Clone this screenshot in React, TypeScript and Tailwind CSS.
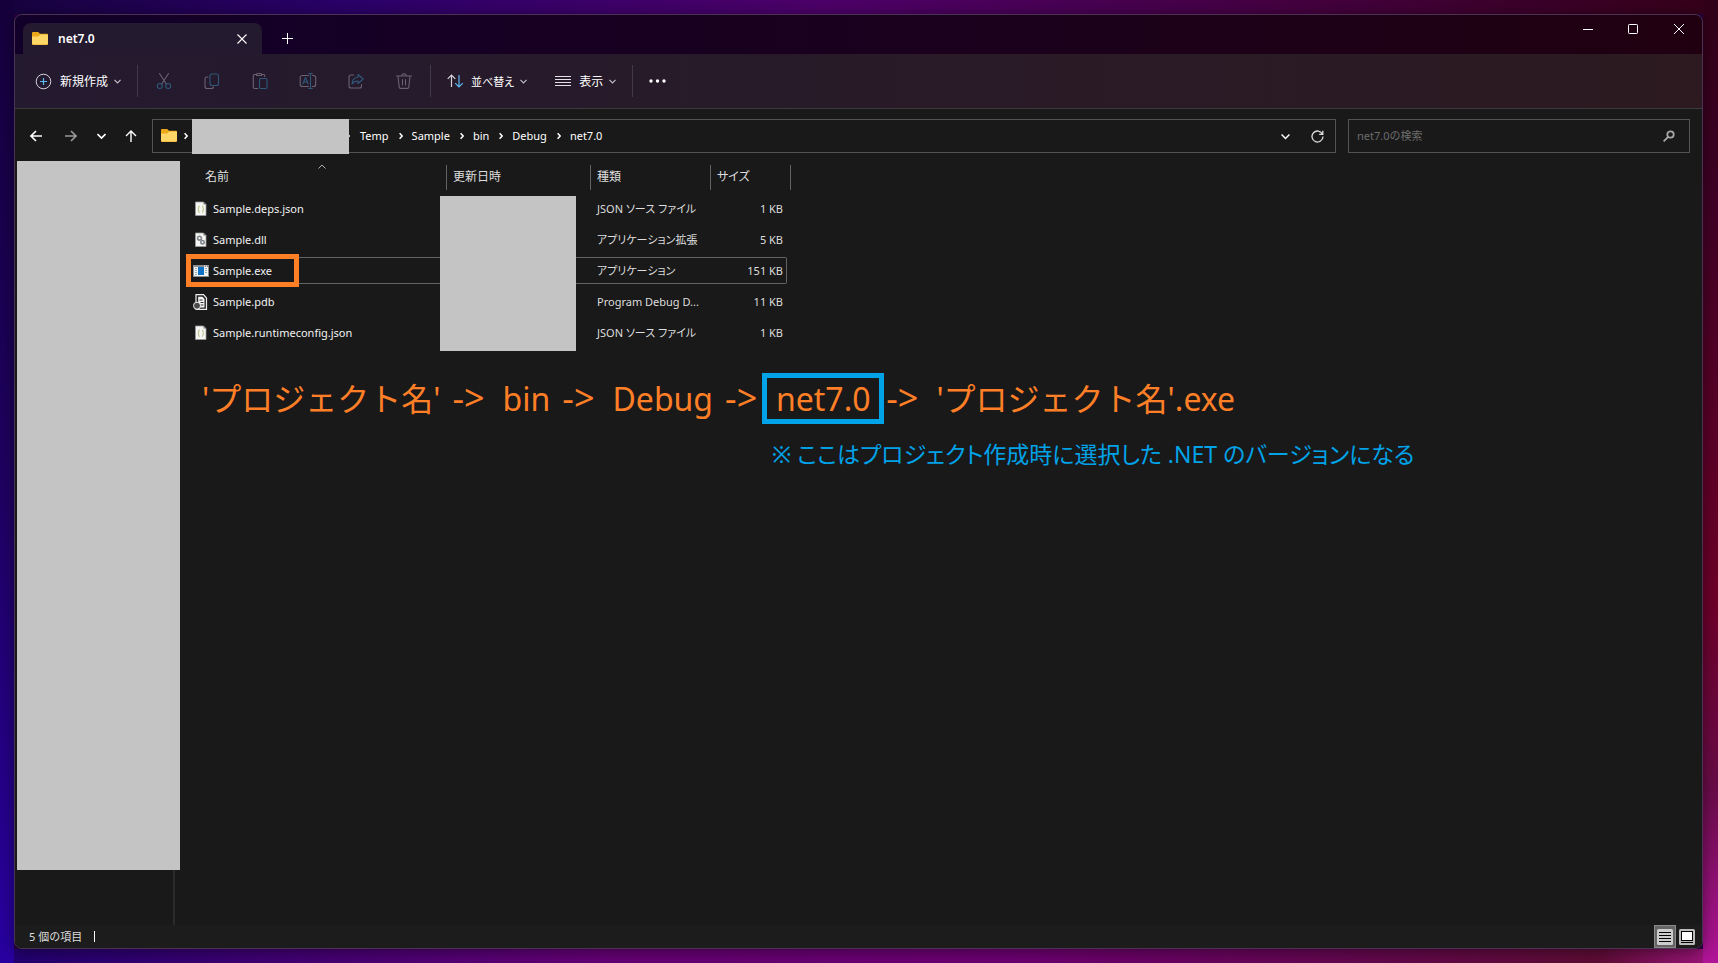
import React from 'react';

type FileKind = 'json' | 'dll' | 'exe' | 'pdb';

interface FileItem {
  name: string;
  kind: FileKind;
  type: string;
  size: string;
}

const FILES: FileItem[] = [
  { name: 'Sample.deps.json', kind: 'json', type: 'JSON ソース ファイル', size: '1 KB' },
  { name: 'Sample.dll', kind: 'dll', type: 'アプリケーション拡張', size: '5 KB' },
  { name: 'Sample.exe', kind: 'exe', type: 'アプリケーション', size: '151 KB' },
  { name: 'Sample.pdb', kind: 'pdb', type: 'Program Debug D...', size: '11 KB' },
  { name: 'Sample.runtimeconfig.json', kind: 'json', type: 'JSON ソース ファイル', size: '1 KB' },
];

const CRUMBS = ['Temp', 'Sample', 'bin', 'Debug', 'net7.0'];

const FolderIcon = () => (
  <svg width="16" height="14" viewBox="0 0 16 14" className="shrink-0">
    <path d="M0 1.2C0 .5.5 0 1.2 0h5L8 1.800h7c.6 0 1 .4 1 1V12H0z" fill="#eba91a" />
    <path d="M0 4.4h6.2L8 2.6h7.2c.5 0 .8.3.8.8v8.4c0 .7-.5 1.2-1.2 1.2H1.2C.5 13 0 12.5 0 11.8z" fill="#ffd766" />
    <path d="M0 11.2c0 .7.5 1.2 1.2 1.2h13.6c.7 0 1.2-.5 1.2-1.2v.6c0 .7-.5 1.2-1.2 1.2H1.2C.5 13 0 12.5 0 11.8z" fill="#e8a820" />
  </svg>
);

const ChevronDown = ({ size = 7 }: { size?: number }) => (
  <svg width={size} height={size} viewBox="0 0 8 8" fill="none" stroke="currentColor" strokeWidth="1.3">
    <path d="M.5 2.2 4 5.700l3.500-3.500" />
  </svg>
);

const CrumbChevron = () => (
  <svg width="4" height="8" viewBox="0 0 4 8" fill="none" stroke="#fff" strokeWidth="1.5" className="shrink-0">
    <path d="M.6 1.2 3.2 4 .6 6.8" />
  </svg>
);

const ToolIcon = ({ children }: { children: React.ReactNode }) => (
  <svg width="18" height="18" viewBox="0 0 18 18" fill="none" stroke="#6a6272" strokeWidth="1.1" strokeLinecap="round" strokeLinejoin="round">
    {children}
  </svg>
);

const BLUE = '#2f5878';

const TOOLS = [
  {
    label: '切り取り',
    icon: (
      <ToolIcon>
        <path d="M4.500 1.500 11.300 12M13.500 1.500 6.700 12" />
        <circle cx="4.800" cy="14" r="2.500" stroke={BLUE} />
        <circle cx="13.200" cy="14" r="2.500" stroke={BLUE} />
      </ToolIcon>
    ),
  },
  {
    label: 'コピー',
    icon: (
      <ToolIcon>
        <path d="M5 5H4a2 2 0 0 0-2 2v7.500a2 2 0 0 0 2 2h4.500a2 2 0 0 0 2-1.500" />
        <rect x="7" y="2" width="8.500" height="11.500" rx="2" stroke={BLUE} />
      </ToolIcon>
    ),
  },
  {
    label: '貼り付け',
    icon: (
      <ToolIcon>
        <path d="M5.500 2.500H3.500a1.200 1.200 0 0 0-1.200 1.200v11.600a1.200 1.200 0 0 0 1.200 1.200h3.200M10.500 2.500h2a1.200 1.200 0 0 1 1.200 1.200v.8M5.500 3.500v-1a1 1 0 0 1 1-1h3a1 1 0 0 1 1 1v1z" />
        <rect x="8.500" y="6.500" width="7.500" height="10" rx="1.200" stroke={BLUE} />
      </ToolIcon>
    ),
  },
  {
    label: '名前の変更',
    icon: (
      <ToolIcon>
        <path d="M9.500 3.500H3.200a2 2 0 0 0-2 2v7a2 2 0 0 0 2 2h6.300M13.500 3.500h1.200a2 2 0 0 1 2 2v7a2 2 0 0 1-2 2h-1.200" />
        <path d="m3.800 12 2.700-6.500L9.200 12M4.700 10h3.600M9.700 1.500h3.600M9.700 16.500h3.600M11.500 1.500v15" stroke={BLUE} />
      </ToolIcon>
    ),
  },
  {
    label: '共有',
    icon: (
      <ToolIcon>
        <path d="M6.500 3H4a2 2 0 0 0-2 2v9a2 2 0 0 0 2 2h8.500a2 2 0 0 0 2-2v-1.500" />
        <path d="M11 2.500 16.200 7 11 11.500V9C8 9 6.300 10 5 12c.2-3.700 2.300-6.500 6-6.800z" stroke={BLUE} />
      </ToolIcon>
    ),
  },
  {
    label: '削除',
    icon: (
      <ToolIcon>
        <path d="M1.500 4h15M6.800 4a2.200 2.200 0 0 1 4.400 0M3 4l1.200 11a1.500 1.500 0 0 0 1.500 1.400h6.600a1.500 1.500 0 0 0 1.500-1.400L15 4M7.500 7.500v5.500M10.500 7.500v5.500" />
      </ToolIcon>
    ),
  },
];

const FileIcon = ({ kind }: { kind: FileKind }) => {
  if (kind === 'exe') {
    return (
      <svg width="16" height="14" viewBox="0 0 16 14">
        <path d="M0 1h16v12H0z" fill="#8b8f93" />
        <path d="M1 3h14v9H1z" fill="#f4f4f4" />
        <path d="M5 3h6v8H5z" fill="#0f72c4" />
        <path d="M2 4.500h2M2 6.500h2M2 8.500h2M2 10.500h2M12 4.500h2M12 6.500h2M12 8.500h2" stroke="#9aa" />
        <path d="M11 2h1M13 2h1" stroke="#fff" />
      </svg>
    );
  }
  if (kind === 'pdb') {
    return (
      <svg width="16" height="16" viewBox="0 0 16 16">
        <path d="M3 .6h7.500L13.500 4v11.400H3z" fill="#222" stroke="#eee" strokeWidth="1.200" />
        <path d="M5.200 2.800h4.300l2 2.200v8.500H5.200z" fill="#f6f6f6" />
        <path d="M6.500 6h3M7.500 8.500h3M7.500 11h3" stroke="#333" />
        <circle cx="4" cy="11.700" r="3.500" fill="#4a4a4a" stroke="#eee" strokeWidth="1" />
      </svg>
    );
  }
  return (
    <svg width="16" height="16" viewBox="0 0 16 16">
      <path d="M2.500 1h8L13 3.500v11H2.500z" fill="#f5f5f3" stroke="#9a9a9a" strokeWidth=".8" />
      <path d="M10.500 1v2.500H13z" fill="#777" />
      {kind === 'json' ? (
        <path d="M6.600 5c-1 0-.9.7-.9 1.600s-.1 1.400-.8 1.600c.7.2.8.8.8 1.700s0 1.600.9 1.600M9 5c1 0 .9.7.9 1.600s.1 1.400.8 1.600c-.7.2-.8.8-.8 1.700s0 1.600-.9 1.600" fill="none" stroke="#b3b66a" />
      ) : (
        <g fill="none" stroke="#80868c">
          <circle cx="6.500" cy="6.200" r="1.900" strokeWidth="1.600" />
          <circle cx="9.500" cy="10.200" r="1.700" strokeWidth="1.600" />
        </g>
      )}
    </svg>
  );
};

const TitleBar = () => (
  <header className="flex h-[39px] items-end justify-between bg-linear-to-r from-[#12002a] via-[#180020] via-40% to-[#200010]">
    <div className="flex items-end pl-2">
      <div className="flex h-[31px] w-[239px] items-center justify-between rounded-t-lg bg-[#241a2f] pr-[13px] pl-[9px]">
        <div className="flex items-center gap-[10px] text-xs font-semibold">
          <FolderIcon />
          <span>net7.0</span>
        </div>
        <button aria-label="タブを閉じる" className="flex h-4 w-[14px] items-center justify-center">
          <svg width="10" height="10" viewBox="0 0 10 10" stroke="#fff" strokeWidth="1.1"><path d="m.5.5 9 9M9.500.5l-9 9" /></svg>
        </button>
      </div>
      <button aria-label="新しいタブ" className="ml-[14px] flex h-[31px] w-[23px] items-center justify-center">
        <svg width="11" height="11" viewBox="0 0 11 11" stroke="#fff"><path d="M5.500 0v11M0 5.500h11" /></svg>
      </button>
    </div>
    <div className="flex h-full items-start">
      <button aria-label="最小化" className="flex h-7 w-11 items-center justify-center">
        <svg width="10" height="10" viewBox="0 0 10 10" stroke="#fff"><path d="M0 5.500h10" /></svg>
      </button>
      <button aria-label="最大化" className="flex h-7 w-[46px] items-center justify-center">
        <svg width="10" height="10" viewBox="0 0 10 10" fill="none" stroke="#fff"><rect x=".5" y=".5" width="9" height="9" rx=".8" /></svg>
      </button>
      <button aria-label="閉じる" className="flex h-7 w-[46px] items-center justify-center">
        <svg width="10" height="10" viewBox="0 0 10 10" stroke="#fff"><path d="m0 0 10 10M10 0 0 10" /></svg>
      </button>
    </div>
  </header>
);

const Toolbar = () => (
  <div className="flex h-[55px] items-center border-b border-[#3d3a3e] bg-linear-to-r from-[#241a2f] to-[#2c1a20] text-xs">
    <button className="ml-5 flex items-center gap-2">
      <svg width="17" height="17" viewBox="0 0 17 17" fill="none" stroke="#d8d4dc">
        <circle cx="8.500" cy="8.500" r="7.300" />
        <path d="M8.500 5v7M5 8.500h7" stroke="#5cb8f0" strokeWidth="1.200" />
      </svg>
      <span className="pt-0.5">新規作成</span>
      <span className="-ml-0.5 text-[#c5c0ca]"><ChevronDown /></span>
    </button>
    <div className="ml-4 h-8 w-px bg-[#413849]" />
    <div className="ml-[2px] flex">
      {TOOLS.map((tool) => (
        <button key={tool.label} aria-label={tool.label} disabled className="flex h-8 w-12 items-center justify-center">
          {tool.icon}
        </button>
      ))}
    </div>
    <div className="ml-[2px] h-8 w-px bg-[#413849]" />
    <button className="ml-4 flex items-center gap-[7px]">
      <svg width="17" height="14" viewBox="0 0 17 14" fill="none" stroke="#d8d4dc" strokeWidth="1.200">
        <path d="M4.500 13V1M.7 4.800 4.500 1l3.800 3.800" />
        <path d="M12 1v12M8.200 9.200 12 13l3.800-3.800" stroke="#5cb8f0" />
      </svg>
      <span className="pt-0.5 text-[11px] [font-feature-settings:'palt']">並べ替え</span>
      <span className="-ml-px text-[#c5c0ca]"><ChevronDown /></span>
    </button>
    <button className="ml-7 flex items-center gap-2">
      <svg width="16" height="11" viewBox="0 0 16 11" stroke="#e4e0e8"><path d="M0 .5h16M0 3.500h16M0 6.500h16M0 9.500h16" /></svg>
      <span className="pt-0.5">表示</span>
      <span className="-ml-0.5 text-[#c5c0ca]"><ChevronDown /></span>
    </button>
    <div className="ml-4 h-8 w-px bg-[#413849]" />
    <button aria-label="もっと見る" className="ml-4 flex h-8 items-center">
      <svg width="17" height="4" viewBox="0 0 17 4" fill="#fff"><circle cx="2" cy="2" r="1.700" /><circle cx="8.500" cy="2" r="1.700" /><circle cx="15" cy="2" r="1.700" /></svg>
    </button>
  </div>
);

const NavBar = () => (
  <nav className="flex items-center pt-[10px] pr-3 pb-2 text-[11px]">
    <div className="flex w-[137px] shrink-0 items-center pl-[15px]">
      <button aria-label="戻る">
        <svg width="12" height="12" viewBox="0 0 12 12" fill="none" stroke="#fff" strokeWidth="1.600"><path d="M12 6H1M6 1 1 6l5 5" /></svg>
      </button>
      <button aria-label="進む" disabled className="ml-[23px]">
        <svg width="12" height="12" viewBox="0 0 12 12" fill="none" stroke="#9a9a9a" strokeWidth="1.600"><path d="M0 6h11M6 1l5 5-5 5" /></svg>
      </button>
      <button aria-label="最近表示した場所" className="ml-5">
        <svg width="9" height="8" viewBox="0 0 9 8" fill="none" stroke="#fff" strokeWidth="1.600"><path d="M.5 2 4.500 6l4-4" /></svg>
      </button>
      <button aria-label="上へ" className="ml-[19px]">
        <svg width="12" height="12" viewBox="0 0 12 12" fill="none" stroke="#fff" strokeWidth="1.400"><path d="M6 12V1M1 6l5-5 5 5" /></svg>
      </button>
    </div>
    <div className="flex h-[34px] min-w-0 flex-1 items-center border border-[#535353] pl-2">
      <FolderIcon />
      <span className="ml-[7px]"><CrumbChevron /></span>
      <div className="z-10 ml-1 h-[35px] w-[157px] shrink-0 bg-[#c4c4c4]" />
      <span className="-ml-[3px]"><CrumbChevron /></span>
      <ol className="ml-[10px] flex items-center">
        {CRUMBS.map((crumb, i) => (
          <li key={crumb} className="flex items-center">
            {i > 0 && <span className="mr-[9px] ml-[10px]"><CrumbChevron /></span>}
            <a href="#">{crumb}</a>
          </li>
        ))}
      </ol>
      <button aria-label="以前の場所" className="ml-auto"><ChevronDown size={9} /></button>
      <button aria-label="最新の情報に更新" className="mr-[11px] ml-[21px]">
        <svg width="13" height="13" viewBox="0 0 13 13" fill="none" stroke="#ddd" strokeWidth="1.300">
          <path d="M11.500 4.200A5.500 5.500 0 1 0 12 6.500M11.800.8v3.600H8.200" />
        </svg>
      </button>
    </div>
    <label className="ml-3 flex h-[34px] w-[342px] items-center border border-[#535353] pr-[14px] pl-2">
      <input type="text" aria-label="検索" placeholder="net7.0の検索" className="min-w-0 flex-1 bg-transparent outline-none placeholder:text-[#6c6c6c]" />
      <svg width="12" height="12" viewBox="0 0 12 12" fill="none" stroke="#a8a8a8" strokeWidth="1.800"><circle cx="7.500" cy="4.500" r="3.200" /><path d="M5.200 6.800.6 11.400" /></svg>
    </label>
  </nav>
);

const HeadCell = ({ label, width, sorted }: { label: string; width: string; sorted?: boolean }) => (
  <th scope="col" className={`${width} p-0 font-normal text-[#dedede]`}>
    <div className={`relative flex h-[25px] items-center border-r border-[#636363] text-xs ${sorted ? 'pl-[15px]' : 'pl-[6px]'}`}>
      <span className="[font-feature-settings:'palt']">{label}</span>
      {sorted && (
        <svg width="8" height="5" viewBox="0 0 8 5" fill="none" stroke="#b0b0b0" className="absolute -top-px left-32"><path d="M.5 4.500 4 1l3.500 3.500" /></svg>
      )}
    </div>
  </th>
);

const FileTable = () => (
  <div className="relative w-[601px] text-[11px]">
    <table className="w-full table-fixed border-collapse text-left">
      <thead>
        <tr className="h-8">
          <HeadCell label="名前" width="w-[257px]" sorted />
          <HeadCell label="更新日時" width="w-[144px]" />
          <HeadCell label="種類" width="w-[120px]" />
          <HeadCell label="サイズ" width="w-[80px]" />
        </tr>
      </thead>
      <tbody>
        {FILES.map((file) => {
          const line = file.kind === 'exe' ? 'border-[#636363]' : 'border-transparent';
          return (
            <tr key={file.name} className="h-[31px]">
              <td className="p-0">
                <div className={`relative flex h-[27px] items-center gap-1 border-y pl-[3px] ${line}`}>
                  <span className="flex w-4 justify-center"><FileIcon kind={file.kind} /></span>
                  <span className="pt-0.5 whitespace-nowrap text-[#f2f2f2]">{file.name}</span>
                  {file.kind === 'exe' && <div className="absolute -top-1 -left-1 h-[33px] w-[113px] border-5 border-[#ff7f27]" />}
                </div>
              </td>
              <td className="p-0"><div className={`h-[27px] border-y ${line}`} /></td>
              <td className="p-0">
                <div className={`flex h-[27px] items-center border-y pt-0.5 pl-[6px] whitespace-nowrap text-[#dedede] [font-feature-settings:'palt'] ${line}`}>{file.type}</div>
              </td>
              <td className="p-0">
                <div className={`mr-1 flex h-[27px] items-center justify-end rounded-r-xs border-y border-r pt-0.5 pr-[3px] text-[#dedede] ${line}`}>{file.size}</div>
              </td>
            </tr>
          );
        })}
      </tbody>
    </table>
    <div className="absolute top-[35px] left-[250px] h-[155px] w-[136px] bg-[#c4c4c4]" />
  </div>
);

const Arrow = () => <span className="ml-3 text-[36px] leading-none">-&gt;</span>;

const PathNote = () => (
  <div className="mt-[25px] pl-3">
    <p className="flex items-baseline text-[32px] leading-[51px] whitespace-nowrap text-[#ff7f27]">
      <span>'プロジェクト名'</span>
      <Arrow />
      <span className="ml-[18px]">bin</span>
      <Arrow />
      <span className="ml-[18px]">Debug</span>
      <Arrow />
      <span className="-mr-2.5 ml-[5px] w-[122px] border-5 border-[#00a2e8] text-center leading-[41px]">net7.0</span>
      <Arrow />
      <span className="ml-[18px]">'プロジェクト名'.exe</span>
    </p>
    <p className="mt-3 pl-[570px] text-[23px] leading-9 whitespace-nowrap text-[#00a2e8] [font-feature-settings:'palt']">
      ※ ここはプロジェクト作成時に選択した .NET のバージョンになる
    </p>
  </div>
);

const StatusBar = () => (
  <footer className="flex h-[23px] items-center justify-between bg-[#1c1c1c] pr-[7px] pl-[14px] text-[11px] text-[#dedede]">
    <div className="flex items-center gap-3">
      <span className="pt-0.5">5 個の項目</span>
      <div className="h-[11px] w-px bg-white" />
    </div>
    <div className="flex items-center gap-[3px]">
      <button aria-label="詳細" className="flex h-[23px] w-[22px] items-center justify-center border border-[#8a8a8a] bg-[#666]">
        <svg width="16" height="16" viewBox="0 0 16 16"><rect width="16" height="16" rx="1.500" fill="#ccc" /><path d="M2 3.500h12M2 6.500h12M2 9.500h12M2 12.500h12" stroke="#000" /></svg>
      </button>
      <button aria-label="大アイコン">
        <svg width="16" height="16" viewBox="0 0 16 16"><rect width="16" height="16" rx="1.500" fill="#bbb" /><rect x="2.500" y="2.500" width="11" height="9" fill="#fff" stroke="#000" /><path d="M2 13.500h12" stroke="#000" /></svg>
      </button>
    </div>
  </footer>
);

const App = () => (
  <div className="flex min-h-screen bg-[#2a0040] [background-image:linear-gradient(to_bottom,#300018,#3e0024_20%,#6c0028_62%,#680c48_82%,#b01498),linear-gradient(to_bottom,#16003c,#1e0060_50%,#2800a0),linear-gradient(to_right,#200070,#640074_35%,#6c0070_60%,#5c0c34_93%,#a01480),linear-gradient(to_right,#17033e,#2a0068_20%,#4c0068_48%,#440040_75%,#340018)] [background-size:15px_100%,14px_100%,100%_14px,100%_14px] [background-position:right,left,bottom,top] bg-no-repeat py-[14px] pr-[15px] pl-[14px] font-['Noto_Sans','Noto_Sans_CJK_JP',sans-serif] text-white">
    <div className="flex min-w-0 flex-1 flex-col overflow-hidden rounded-lg border border-[#4c3354] bg-[#191919] shadow-[0_2px_14px_rgba(0,0,0,0.45)]">
      <TitleBar />
      <Toolbar />
      <NavBar />
      <div className="flex flex-1">
        <aside className="flex w-[160px] shrink-0 border-r-2 border-[#2b2b2b] pb-[55px] pl-[2px]">
          <div className="z-10 w-[163px] shrink-0 bg-[#c4c4c4]" />
        </aside>
        <main className="min-w-0 flex-1 pl-[15px]">
          <FileTable />
          <PathNote />
        </main>
      </div>
      <StatusBar />
    </div>
  </div>
);

export default App;
